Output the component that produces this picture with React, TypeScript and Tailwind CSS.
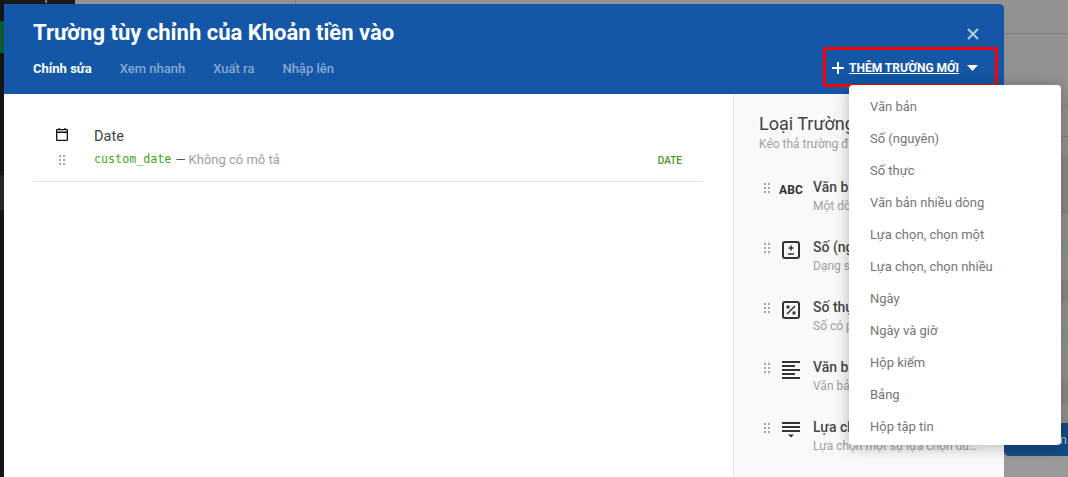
import React from "react";

const Handle = () => (
  <svg width="6" height="10" viewBox="0 0 6 10" className="block" fill="#a3a3a3">
    {[0, 4, 8].map((y) => (
      <React.Fragment key={y}>
        <rect x="0" y={y} width="2" height="2" />
        <rect x="4" y={y} width="2" height="2" />
      </React.Fragment>
    ))}
  </svg>
);

const BoxPlus = () => (
  <svg width="24" height="24" viewBox="0 0 24 24" fill="none" stroke="#333" strokeWidth="2">
    <rect x="4" y="4" width="16" height="16" rx="2" />
    <path d="M12 7.5v5M9.5 10h5M9 16h6" strokeWidth="1.6" />
  </svg>
);

const BoxPercent = () => (
  <svg width="24" height="24" viewBox="0 0 24 24" fill="none" stroke="#333" strokeWidth="2">
    <rect x="4" y="4" width="16" height="16" rx="2" />
    <path d="M16 8l-8 8" strokeWidth="1.6" />
    <rect x="7.5" y="7.5" width="3" height="3" fill="#333" stroke="none" />
    <rect x="13.5" y="13.5" width="3" height="3" fill="#333" stroke="none" />
  </svg>
);

const LinesIcon = () => (
  <svg width="24" height="24" viewBox="0 0 24 24" fill="#333">
    <rect x="3" y="3" width="18" height="2" />
    <rect x="3" y="7" width="13" height="2" />
    <rect x="3" y="11" width="18" height="2" />
    <rect x="3" y="15" width="13" height="2" />
    <rect x="3" y="19" width="18" height="2" />
  </svg>
);

const SelectIcon = () => (
  <svg width="24" height="24" viewBox="0 0 24 24" fill="#333">
    <rect x="3" y="4" width="18" height="2" />
    <rect x="3" y="8" width="18" height="2" />
    <rect x="3" y="12" width="18" height="2" />
    <path d="M9 16.5h6l-3 3z" />
  </svg>
);

const AbcIcon = () => <span className="font-bold text-[12px] leading-[24px] text-[#333] tracking-[0.2px]">ABC</span>;

const fieldTypes = [
  { title: "Văn bản", sub: "Một dòng văn bản ngắn gọn", icon: <AbcIcon /> },
  { title: "Số (nguyên)", sub: "Dạng số nguyên, không có phần lẻ", icon: <BoxPlus /> },
  { title: "Số thực", sub: "Số có phần thập phân", icon: <BoxPercent /> },
  { title: "Văn bản nhiều dòng", sub: "Văn bản dài nhiều dòng", icon: <LinesIcon /> },
  { title: "Lựa chọn, chọn một", sub: "Lựa chọn một sự lựa chọn duy nhất", icon: <SelectIcon /> },
];

const menu = [
  "Văn bản",
  "Số (nguyên)",
  "Số thực",
  "Văn bản nhiều dòng",
  "Lựa chọn, chọn một",
  "Lựa chọn, chọn nhiều",
  "Ngày",
  "Ngày và giờ",
  "Hộp kiểm",
  "Bảng",
  "Hộp tập tin",
];

export default function App() {
  return (
    <div className="relative flex w-[1068px] h-[477px] overflow-hidden bg-[#999999] font-['Roboto',sans-serif]">
      {/* Page behind: left edge */}
      <div className="w-1 h-full flex flex-col bg-[#151515] shrink-0">
        <div className="h-[21px]" />
        <div className="h-[32px] bg-[#0c5c30]" />
        <div className="h-[122px]" />
        <div className="h-[35px] bg-[#262626]" />
      </div>

      {/* Middle */}
      <div className="w-[1000px] shrink-0 flex flex-col">
        <div className="h-1 flex overflow-hidden bg-[#939393]">
          <div className="w-[71px] h-1 bg-[#1a1a1a] overflow-hidden">
            <div className="-mt-[13px] -ml-[4px] text-[16px] leading-[16px] text-[#9a9a9a] whitespace-nowrap">port Ope...</div>
          </div>
          <div className="w-[220px]" />
          <div className="w-px bg-[#7d7d7d]" />
        </div>

        {/* Modal */}
        <div className="flex-1 flex flex-col bg-white rounded-tr-[4px] overflow-hidden">
          <header className="h-[90px] shrink-0 bg-[#1357a6] text-white pt-4 pl-[29px] pr-[6px]">
            <div className="h-[27px] flex items-center justify-between pr-[19px]">
              <h1 className="text-[22px] leading-[27px] font-bold -mt-[2px]">Trường tùy chỉnh của Khoản tiền vào</h1>
              <svg width="12" height="12" viewBox="0 0 12 12" stroke="#b9cbe3" strokeWidth="2" fill="none">
                <path d="M1 1l10 10M11 1L1 11" />
              </svg>
            </div>
            <div className="h-10 flex items-center justify-between">
              <nav className="flex gap-[28px] text-[13px] font-medium text-[#88a8d0] pt-[4px]">
                <span className="text-white font-bold">Chỉnh sửa</span>
                <span>Xem nhanh</span>
                <span>Xuất ra</span>
                <span>Nhập lên</span>
              </nav>
              <div className="w-[175px] h-10 border-[3px] border-[#ff0000] flex items-center pl-[6px] pt-[1px]">
                <svg width="12" height="12" viewBox="0 0 12 12" fill="white" className="shrink-0">
                  <path d="M5 0h2v5h5v2H7v5H5V7H0V5h5z" />
                </svg>
                <span className="ml-[5px] text-[12px] font-bold underline whitespace-nowrap">THÊM TRƯỜNG MỚI</span>
                <svg width="11" height="6" viewBox="0 0 11 6" fill="white" className="ml-[8px] shrink-0">
                  <path d="M0 0h11L5.5 6z" />
                </svg>
              </div>
            </div>
          </header>

          <div className="flex-1 flex min-h-0">
            {/* Left: fields */}
            <section className="w-[729px] shrink-0 pl-[29px] pr-[30px] pt-[32px]">
              <div className="flex border-b border-[#e6e6e6] pb-[11px]">
                <div className="w-[61px] flex flex-col items-center pr-[3px] shrink-0">
                  <svg width="12" height="13" viewBox="0 0 12 13" fill="none" stroke="#111" strokeWidth="1.3" className="mt-[2px]">
                    <rect x="0.65" y="1.65" width="10.7" height="10.7" rx="0.6" />
                    <path d="M0.65 4.2h10.7" strokeWidth="1.4" />
                    <path d="M3 0v1.5M9 0v1.5" />
                  </svg>
                  <div className="mt-[14px]">
                    <Handle />
                  </div>
                </div>
                <div className="flex-1">
                  <div className="text-[14.5px] leading-[20px] pt-px text-[#424242]">Date</div>
                  <div className="mt-[3px] flex items-center h-5 text-[13px] text-[#9e9e9e]">
                    <code className="font-['DejaVu_Sans_Mono',monospace] text-[11.7px] text-[#3fa815]">custom_date</code>
                    <span className="text-[#555] ml-[4px]">—</span>
                    <span className="ml-[3px]">Không có mô tả</span>
                    <span className="ml-auto mr-[21px] text-[10px] font-medium text-[#3f9a1c]">DATE</span>
                  </div>
                </div>
              </div>
            </section>

            {/* Right: field types */}
            <aside className="flex-1 min-w-0 bg-[#f9f9f9] border-l border-[#e6e6e6] pl-[25px] pr-[26px] pt-[19px]">
              <h2 className="text-[18px] leading-[22px] text-[#424242]">Loại Trường</h2>
              <p className="text-[12px] leading-[16px] mt-[1px] text-[#a0a0a0] truncate">Kéo thả trường để thêm vào</p>
              <ul className="mt-[25px] flex flex-col">
                {fieldTypes.map((f) => (
                  <li key={f.title} className="h-[60px] flex pl-[5px]">
                    <div className="mt-[6px] shrink-0">
                      <Handle />
                    </div>
                    <div className="ml-[9px] mt-px w-6 h-6 flex items-center justify-center shrink-0 overflow-visible">{f.icon}</div>
                    <div className="ml-[10px] min-w-0 flex-1">
                      <div className="text-[14px] leading-[20px] font-medium text-[#484848] truncate">{f.title}</div>
                      <div className="text-[12px] leading-[18px] text-[#a0a0a0] truncate">{f.sub}</div>
                    </div>
                  </li>
                ))}
              </ul>
            </aside>
          </div>
        </div>
      </div>

      {/* Page behind: right edge */}
      <div className="flex-1 flex flex-col bg-[#929292]">
        <div className="h-[33px] shrink-0" />
        <div className="h-px bg-[#7f7f7f] shrink-0" />
        <div className="h-[71px] shrink-0" />
        <div className="h-px bg-[#7f7f7f] shrink-0" />
        <div className="h-[30px] shrink-0" />
        <div className="h-px bg-[#7f7f7f] shrink-0" />
        <div className="h-[20px] shrink-0" />
        <div className="h-[55px] bg-[#8a8a8a] shrink-0" />
        <div className="h-px bg-[#7f7f7f] shrink-0" />
        <div className="h-[28px] shrink-0" />
        <div className="h-[12px] bg-[#88978a] shrink-0" />
        <div className="h-[27px] shrink-0" />
        <div className="h-[21px] bg-[#8a8a8a] shrink-0" />
        <div className="h-[29px] shrink-0" />
        <div className="h-[11px] bg-[#88978a] shrink-0" />
        <div className="h-[42px] shrink-0" />
        <div className="h-[21px] bg-[#8a8a8a] shrink-0" />
        <div className="h-[19px] shrink-0" />
        <div className="h-[33px] bg-[#164a85] rounded-bl-[5px] shrink-0 flex items-center justify-end text-[13px] text-[#a9bdd6] pr-[1px]">n</div>
        <div className="flex-1 bg-[#999999]" />
      </div>

      {/* Dropdown */}
      <div className="absolute left-[849px] top-[85px] w-[212px] bg-white rounded-[4px] pt-[6px] pb-[2px] shadow-[0_2px_16px_rgba(0,0,0,0.28)]">
        {menu.map((m) => (
          <div key={m} className="h-8 pl-[21px] flex items-center text-[13px] text-[#757575]">
            {m}
          </div>
        ))}
      </div>
    </div>
  );
}
